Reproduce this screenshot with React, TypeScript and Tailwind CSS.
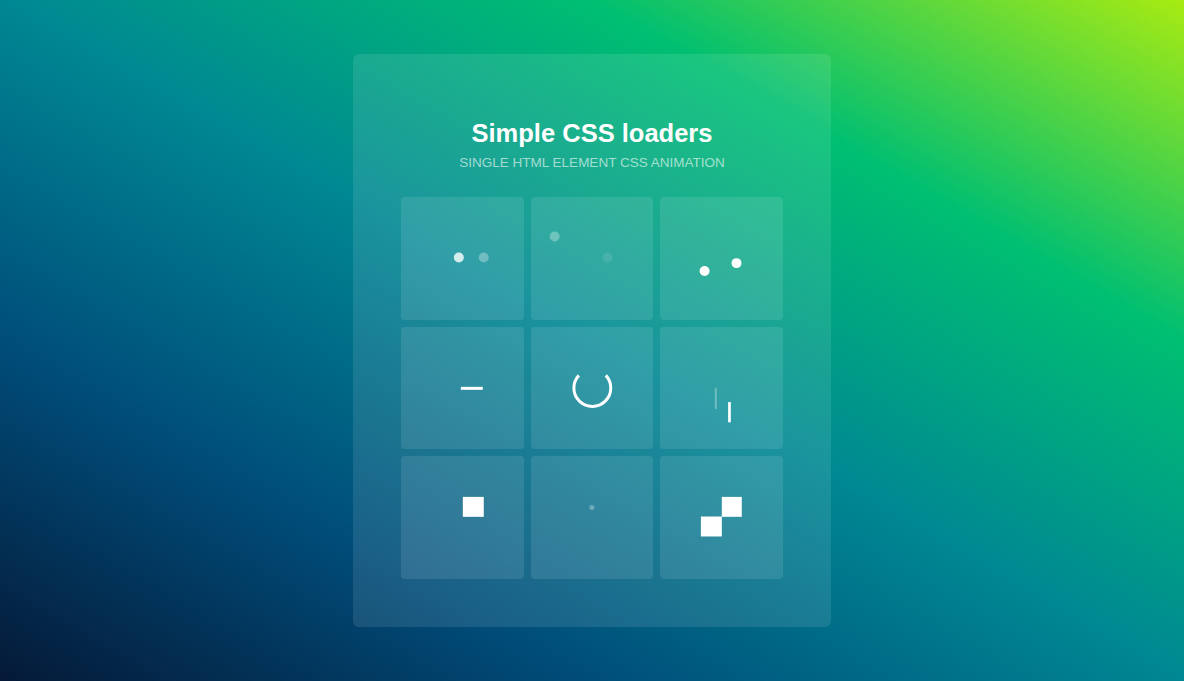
import React from 'react';

type Loader = () => React.ReactElement;

// each loader is drawn in a 123x123 box, frozen mid-animation like the screenshot
const loaders: Loader[] = [
    () => (
        <>
            <circle cx="58" cy="60.7" r="5" fill="#fff" fillOpacity="0.8" />
            <circle cx="83" cy="60.7" r="5" fill="#fff" fillOpacity="0.3" />
        </>
    ),
    () => (
        <>
            <circle cx="23.7" cy="39.7" r="5" fill="#fff" fillOpacity="0.3" />
            <circle cx="76.7" cy="60.7" r="5" fill="#fff" fillOpacity="0.1" />
        </>
    ),
    () => (
        <>
            <circle cx="44.7" cy="74.3" r="5" fill="#fff" />
            <circle cx="76.7" cy="66.3" r="5" fill="#fff" />
        </>
    ),
    () => <rect x="60" y="60" width="22" height="3" fill="#fff" />,
    () => (
        <path d="M75 48.5 A18.5 18.5 0 1 1 48 48.5" fill="none" stroke="#fff" strokeWidth="3" />
    ),
    () => (
        <>
            <rect x="55" y="61.3" width="2" height="21" fill="#fff" fillOpacity="0.3" />
            <rect x="68.3" y="75.3" width="2.7" height="20.3" fill="#fff" />
        </>
    ),
    () => <rect x="62" y="41" width="21" height="20" fill="#fff" />,
    () => <circle cx="61" cy="51.7" r="2.5" fill="#fff" fillOpacity="0.3" />,
    () => (
        <>
            <rect x="62" y="41" width="20" height="20" fill="#fff" />
            <rect x="41" y="60.7" width="21" height="20" fill="#fff" />
        </>
    ),
];

const App = () => {
    return (
        <div className="min-h-screen w-full flex items-center justify-center bg-[linear-gradient(to_right_top,#051937,#004d7a,#008793,#00bf72,#a8eb12)] font-['Liberation_Sans',Arial,sans-serif]">
            {/* CARD START */}
            <div className="w-[478px] rounded-md bg-white/10 p-12">
                <div className="flex flex-col items-center mt-4">
                    <h1 className="text-[25.5px] leading-[30px] font-bold text-white">Simple CSS loaders</h1>
                    <p className="mt-[5px] text-[13.5px] leading-5 uppercase text-white/60">Single HTML element CSS animation</p>
                </div>

                {/* LOADER GRID */}
                <div className="mt-6 grid grid-cols-3 gap-[7px]">
                    {loaders.map((Draw, i) => (
                        <div key={i} className="aspect-square rounded bg-white/10">
                            <svg viewBox="0 0 123 123" className="w-full h-full block">
                                <Draw />
                            </svg>
                        </div>
                    ))}
                </div>
            </div>
            {/* CARD END */}
        </div>
    );
};

export default App;
